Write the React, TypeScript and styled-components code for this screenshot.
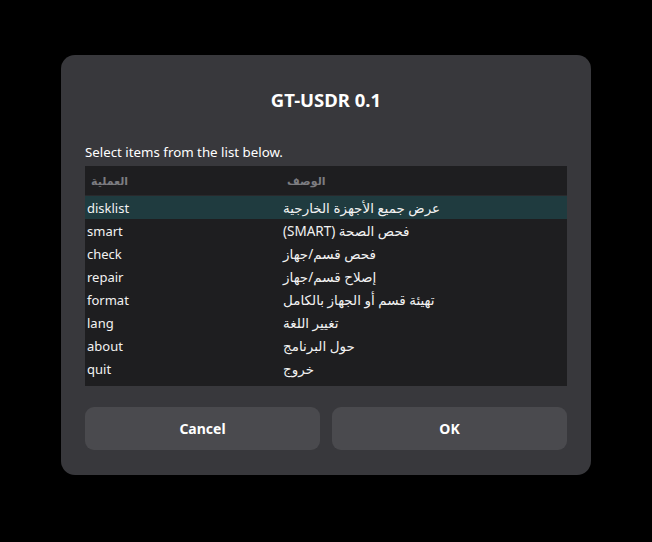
import React from 'react'
import styled, {createGlobalStyle} from 'styled-components'

const GlobalStyle = createGlobalStyle`
    html, body {
        margin: 0;
        padding: 0;
        background: #000;
        font-family: "Noto Sans", "DejaVu Sans", sans-serif;
    }
`

const items = [
    {op: 'disklist', desc: 'عرض جميع الأجهزة الخارجية'},
    {op: 'smart', desc: 'فحص الصحة (SMART)'},
    {op: 'check', desc: 'فحص قسم/جهاز'},
    {op: 'repair', desc: 'إصلاح قسم/جهاز'},
    {op: 'format', desc: 'تهيئة قسم أو الجهاز بالكامل'},
    {op: 'lang', desc: 'تغيير اللغة'},
    {op: 'about', desc: 'حول البرنامج'},
    {op: 'quit', desc: 'خروج'},
]

const App: React.FC = () => {
    const selected = 0
    return (
        <>
            <GlobalStyle />
            <Page>
                <Dialog>
                    <Title>GT-USDR 0.1</Title>
                    <Prompt>Select items from the list below.</Prompt>
                    <ListBox>
                        <HeaderRow>
                            <HeaderCell dir="rtl">العملية</HeaderCell>
                            <HeaderCell dir="rtl">الوصف</HeaderCell>
                        </HeaderRow>
                        {items.map((item, i) => (
                            <Row key={item.op} $selected={i === selected}>
                                <OpCell>{item.op}</OpCell>
                                <DescCell dir="rtl">{item.desc}</DescCell>
                            </Row>
                        ))}
                    </ListBox>
                    <Buttons>
                        <Button>Cancel</Button>
                        <Button>OK</Button>
                    </Buttons>
                </Dialog>
            </Page>
        </>
    )
}

const Page = styled.div`
    width: 652px;
    height: 542px;
    display: flex;
    justify-content: center;
    padding-top: 55px;
    box-sizing: border-box;
`

const Dialog = styled.div`
    width: 530px;
    height: 420px;
    background: #38383c;
    border-radius: 14px;
    box-sizing: border-box;
    padding: 0 24px;
    display: flex;
    flex-direction: column;
    color: #fff;
`

const Title = styled.div`
    margin-top: 33px;
    text-align: center;
    font-weight: 700;
    font-size: 18.5px;
    line-height: 24px;
`

const Prompt = styled.div`
    margin-top: 30px;
    font-size: 13.3px;
    line-height: 20px;
`

const ListBox = styled.div`
    margin-top: 4px;
    background: #1e1e20;
    height: 220px;
    display: flex;
    flex-direction: column;
`

const gridCols = `
    display: grid;
    grid-template-columns: 196px 1fr;
`

const HeaderRow = styled.div`
    ${gridCols};
    height: 29px;
    align-items: center;
    padding-left: 6px;
    border-bottom: 1px solid #29292c;
`

const HeaderCell = styled.div`
    justify-self: start;
    color: #7c7c80;
    font-weight: 700;
    font-size: 11px;
`

const Row = styled.div<{$selected?: boolean}>`
    ${gridCols};
    height: 23px;
    align-items: center;
    padding-left: 2px;
    background: ${p => (p.$selected ? '#1f3b3f' : 'transparent')};
    font-size: 13px;
    color: #f2f2f2;
`

const OpCell = styled.div``

const DescCell = styled.div`
    justify-self: start;
    font-size: 13.5px;
`

const Buttons = styled.div`
    margin-top: 21px;
    display: grid;
    grid-template-columns: 1fr 1fr;
    gap: 12px;
`

const Button = styled.button`
    height: 43px;
    border: none;
    border-radius: 9px;
    background: #4a4a4e;
    color: #fff;
    font-family: "Noto Sans", "DejaVu Sans", sans-serif;
    font-weight: 700;
    font-size: 14px;
    cursor: pointer;
`

export default App
